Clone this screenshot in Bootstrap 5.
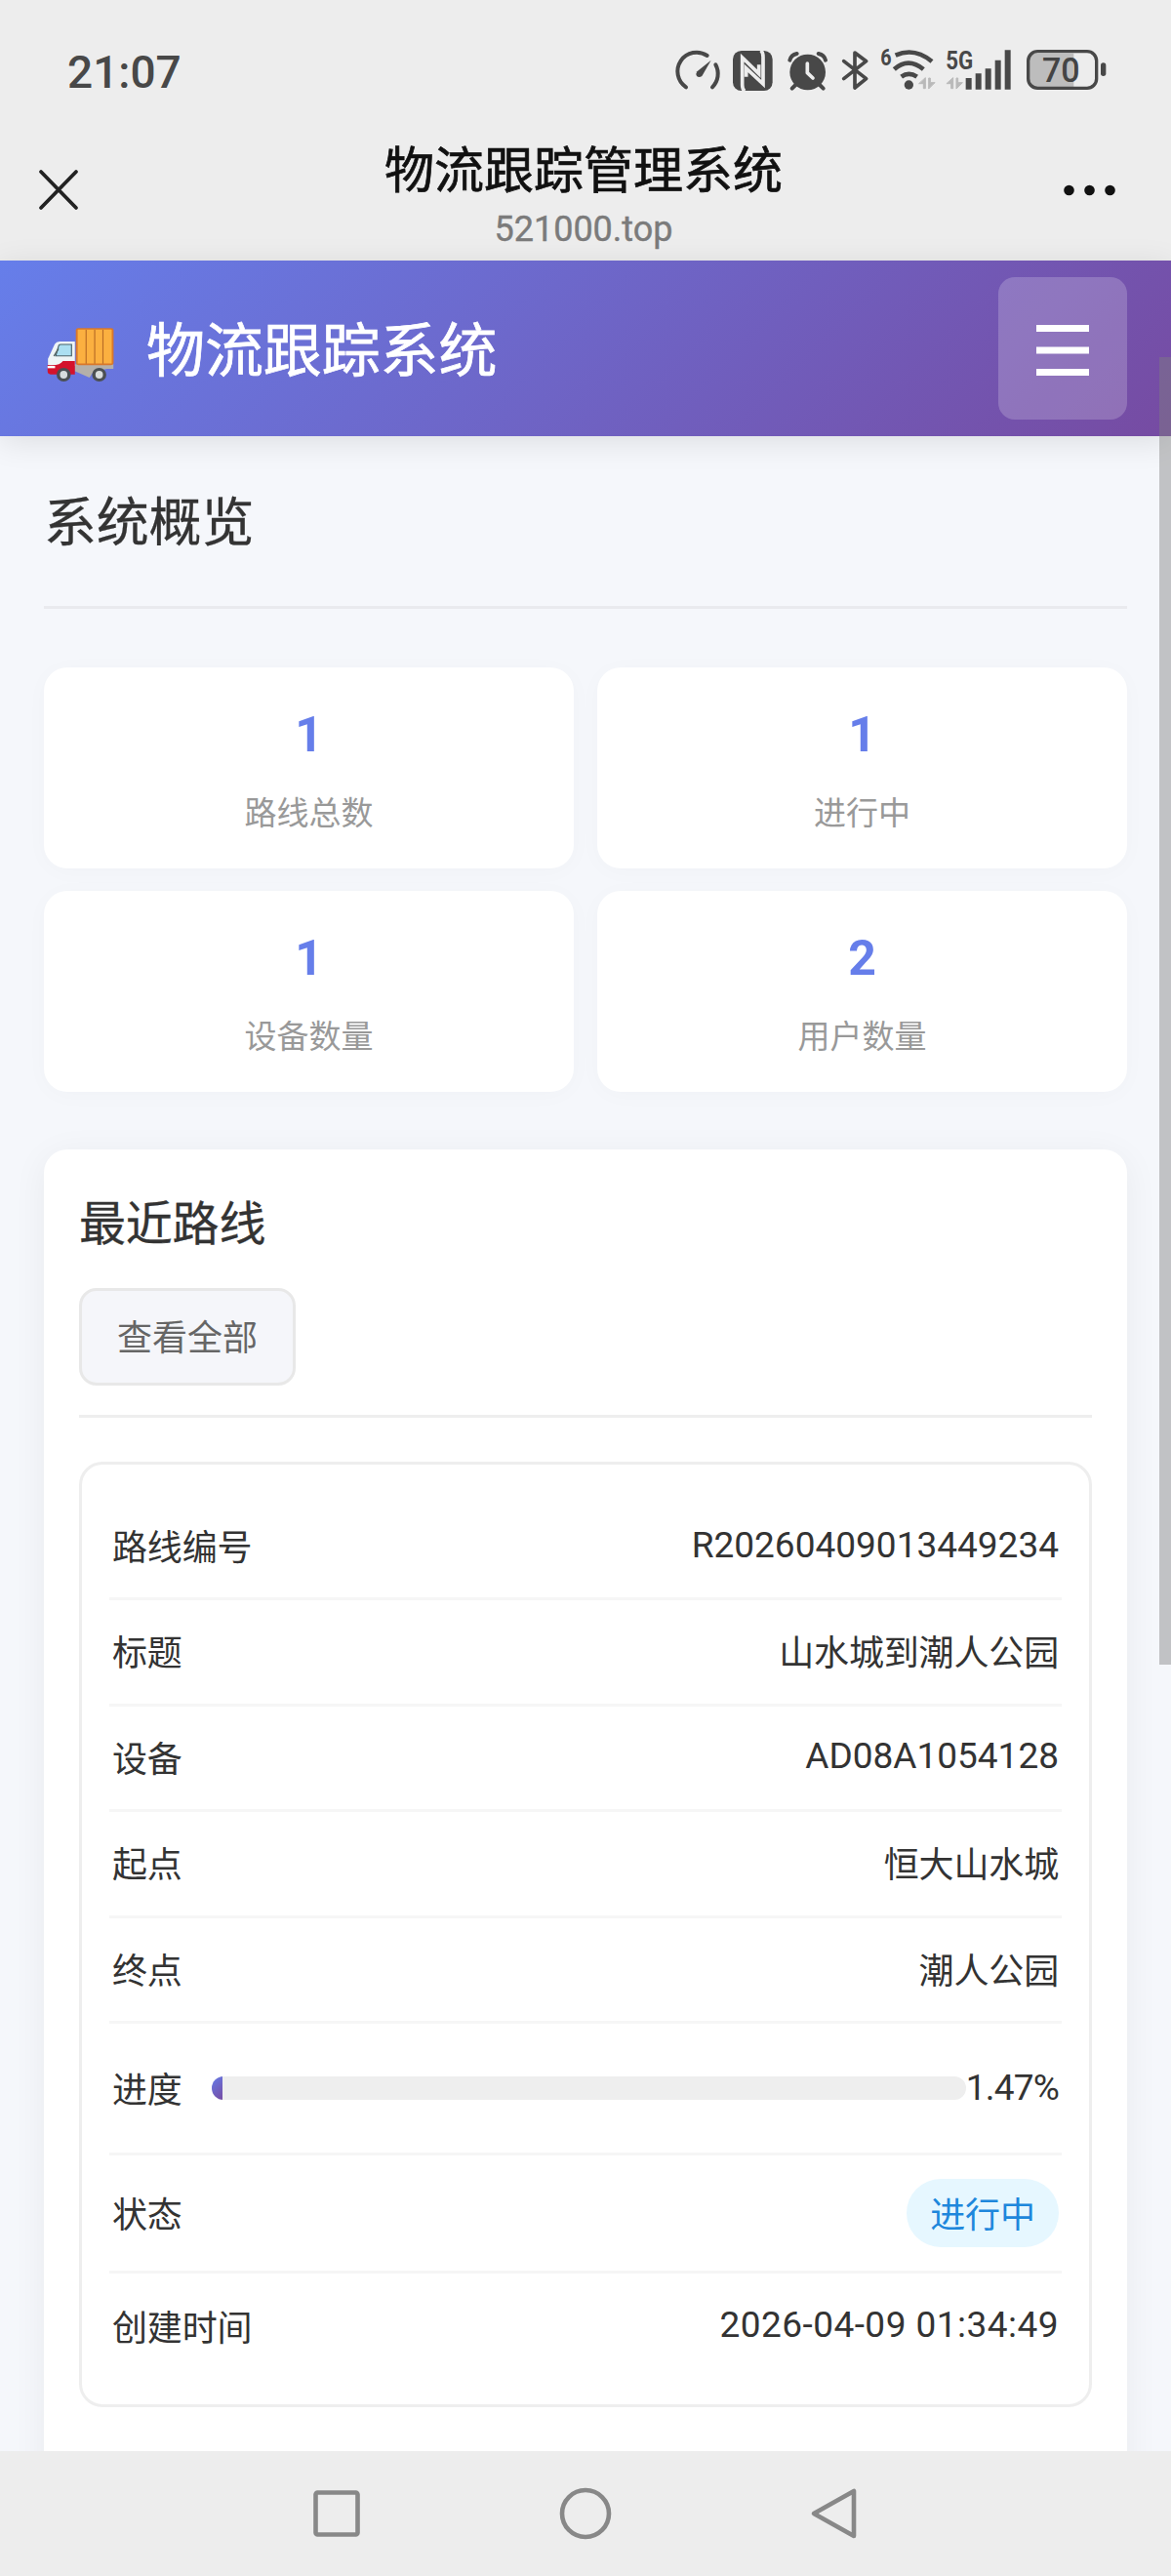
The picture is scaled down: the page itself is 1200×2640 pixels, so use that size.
<!DOCTYPE html>
<html lang="zh-CN">
<head>
<meta charset="utf-8">
<meta name="viewport" content="width=device-width, initial-scale=1">
<title>物流跟踪管理系统</title>
<link rel="stylesheet" href="https://cdn.jsdelivr.net/npm/bootstrap@5.3.0/dist/css/bootstrap.min.css">
<style>
  body { width: 1200px; height: 2640px; overflow: hidden; background: #f5f7fb; color: #333;
    font-family: "Noto Sans CJK SC", sans-serif; font-size: 36px; line-height: 1.2; }
  svg { display: block; flex: none; }
  /* phone chrome */
  .sys-status { height: 147px; background: #ededed; padding: 0 39px 0 69px; }
  .sys-clock { font: 500 46px/1 Roboto, sans-serif; color: #484848; }
  .wv-bar { height: 120px; background: #ededed; padding: 0 56px 0 38px; }
  .wv-heading { margin-left: 20px; margin-top: -6px; }
  .wv-title { font-size: 51px; line-height: 60px; color: #111; font-weight: 400; -webkit-text-stroke: .7px #111; }
  .wv-host { font: 400 36px/42px Roboto, sans-serif; color: #7b7b7b; margin-top: 13px; -webkit-text-stroke: .4px #7b7b7b; }
  /* application header */
  .app-head { height: 180px; padding: 0 45px; background: linear-gradient(135deg, #667eea 0%, #764ba2 100%);
    box-shadow: 0 6px 30px rgba(0,0,0,.1); position: relative; }
  .app-name { font-size: 60px; line-height: 70px; -webkit-text-stroke: .7px #fff; letter-spacing: -.1px; margin-bottom: 4px; }
  .menu-toggle { width: 132px; height: 146px; border: 0; border-radius: 17px; background: rgba(255,255,255,.2); }
  .app-main { height: 2065px; overflow: hidden; padding: 0 45px; }
  .page-title { height: 177px; border-bottom: 3px solid #e9eaee; font-size: 54px; padding-bottom: 3px; letter-spacing: -.2px; -webkit-text-stroke: .3px #333; }
  .stat-grid { display: grid; grid-template-columns: 1fr 1fr; gap: 23px 24px; margin-top: 60px; }
  .stat-box { height: 206px; border-radius: 24px; background: #fff; padding-top: 39px; box-shadow: 0 3px 24px rgba(0,0,0,.025); }
  .stat-num { font: 700 50px/60px Roboto, sans-serif; color: #667eea; }
  .stat-label { font-size: 33px; line-height: 40px; color: #999; margin-top: 28px; }
  .panel { margin-top: 59px; height: 1400px; border-radius: 24px; background: #fff; padding: 0 36px;
    box-shadow: 0 6px 36px rgba(0,0,0,.055); }
  .panel-top { height: 275px; border-bottom: 3px solid #eee; padding-top: 42px; }
  .panel-title { font-size: 48px; line-height: 60px; letter-spacing: -.2px; -webkit-text-stroke: .3px #333; }
  .btn-all { width: 222px; height: 100px; border: 3px solid #e8e8e8; border-radius: 18px; background: #f5f6fa;
    color: #666; font-size: 36px; margin-top: 40px; padding: 0 0 4px; }
  .route { margin-top: 45px; height: 969px; border: 3px solid #eee; border-radius: 24px; padding: 31px 28px 0; }
  .route-row { height: 108.4px; border-bottom: 3px solid #f6f6f6; padding: 0 3px 2px; letter-spacing: -.15px; }
  .route-row .val { font: 400 37px/44px Roboto, "Noto Sans CJK SC", sans-serif; letter-spacing: 0; }
  .route-row .pct { letter-spacing: -.8px; }
  .route-row .stamp { letter-spacing: .47px; }
  .route-row .han { font: inherit; letter-spacing: -.15px; }
  .row-progress { height: 135px; padding-bottom: 0; }
  .row-state { height: 121px; padding-bottom: 0; }
  .track { height: 24px; border-radius: 12px; background: #eee; overflow: hidden; margin-left: 30px; }
  .fill { height: 24px; background: linear-gradient(135deg, #667eea, #764ba2); }
  .state-pill { width: 156px; height: 70px; border-radius: 35px; background: #e6f7ff; color: #1e87dc; }
  .sys-nav { height: 128px; background: #ededed; position: relative; }
  .scroll-thumb { position: absolute; left: 1188px; top: 366px; width: 12px; height: 1340px; background: rgba(128,128,128,.44); }
</style>
</head>
<body class="position-relative">
<div class="sys-status d-flex align-items-center justify-content-between">
  <span class="sys-clock">21:07</span>
  <svg width="480" height="90" viewBox="0 0 1440 270" fill="none" stroke="#484848" stroke-linecap="round" stroke-linejoin="round">
    <!-- speed gauge -->
    <path d="M66 181A58 58 0 0 1 131 84M157 112A58 58 0 0 1 147 181" stroke-width="12"/>
    <path d="M143 98L115 147Q106 153 99 147Q95 140 100 133Z" fill="#484848" stroke="none"/>
    <!-- NFC -->
    <rect x="210" y="69" width="122" height="123" rx="26" fill="#484848" stroke="none"/>
    <path d="M246 193Q239 187 239 174V90L290 140V112M296 68Q303 74 303 88V171L251 123V149" stroke="#ededed" stroke-width="11" stroke-linecap="butt" stroke-linejoin="miter"/>
    <!-- alarm -->
    <circle cx="440" cy="135" r="55" fill="#484848" stroke="none"/>
    <path d="M385 98Q389 82 407 78M495 98Q491 82 473 78M403 174L392 185M477 174L488 185" stroke-width="12"/>
    <path d="M439 108V137L456 153" stroke="#ededed" stroke-width="11"/>
    <!-- bluetooth -->
    <path d="M551 101L620 155L585 183V75L620 101L551 155" stroke-width="11"/>
    <!-- wifi -->
    <path d="M710 83Q768 57 822 102" stroke-width="14" stroke-linecap="butt"/>
    <path d="M706 126Q749 88 796 126M728 149Q751 132 776 149" stroke-width="14" stroke-linecap="butt"/>
    <circle cx="751" cy="174" r="14" fill="#484848" stroke="none"/>
    <g id="arrows" fill="#b9b9b9" stroke="#b9b9b9" stroke-width="3"><path d="M802 153V185H796V170H783ZM812 185V153H817V167H830Z"/></g>
    <use href="#arrows" x="85"/>
    <!-- signal -->
    <path d="M935 153V188M965 139V188M995 124V188M1025 98V188M1055 67V188" stroke-width="18" stroke-linecap="butt"/>
    <g fill="#484848" stroke="none" font-family="Roboto, sans-serif" font-weight="700">
      <text x="664" y="114" font-size="70" textLength="34" lengthAdjust="spacingAndGlyphs">6</text>
      <text x="865" y="126" font-size="80" textLength="84" lengthAdjust="spacingAndGlyphs">5G</text>
    </g>
    <!-- battery -->
    <path d="M1144 77H1258V180H1144Q1120 180 1120 155V102Q1120 77 1144 77Z" fill="#bdbdbd" stroke="none"/>
    <rect x="1118" y="71" width="210" height="113" rx="29" stroke-width="10"/>
    <path d="M1349 114V139" stroke-width="16"/>
    <text x="1219" y="165" font-size="106" text-anchor="middle" textLength="116" lengthAdjust="spacingAndGlyphs" fill="#444" stroke="none" font-family="Roboto, sans-serif" font-weight="500">70</text>
  </svg>
</div>

<header class="wv-bar d-flex align-items-start justify-content-between">
  <svg width="44" height="44" viewBox="0 0 44 44" style="margin-top:26px" stroke="#222" stroke-width="3.8" stroke-linecap="round"><path d="M4 3L40 40M40 3L4 40"/></svg>
  <div class="wv-heading text-center ms-auto me-auto ps-4">
    <div class="wv-title">物流跟踪管理系统</div>
    <div class="wv-host">521000.top</div>
  </div>
  <svg width="54" height="14" viewBox="0 0 54 14" style="margin-top:41px" fill="#111"><circle cx="5.5" cy="7" r="5.3"/><circle cx="26.5" cy="7" r="5.3"/><circle cx="47.5" cy="7" r="5.3"/></svg>
</header>

<nav class="app-head d-flex align-items-center justify-content-between text-white">
  <div class="d-flex align-items-center">
    <svg width="69" height="56" viewBox="126 231 180 168" preserveAspectRatio="none" style="margin:14px 33px 0 3px">
      <path d="M200 343H304V357H287L250 366L240 384L200 364Z" fill="#b4b0aa"/>
      <rect x="206" y="234" width="96" height="109" rx="4" fill="#fbb040" stroke="#d9772b" stroke-width="5"/>
      <path d="M231 237V341M254 237V341M276 237V341" stroke="#b86c26" stroke-width="3"/>
      <path d="M129 347V326L147 281Q151 273 160 273H201V348Z" fill="#eef4f6"/>
      <path d="M150 317L158 285Q159 282 164 282H192V317Z" fill="#abdff2" stroke="#48626c" stroke-width="3"/>
      <path d="M145 318L157 295" stroke="#566" stroke-width="4"/>
      <path d="M128 345Q160 349 169 333H201V374H136Q128 374 128 364Z" fill="#d4122c"/>
      <path d="M128 348H148V355H128Z" fill="#fff"/>
      <ellipse cx="171" cy="375" rx="19" ry="21" fill="#4b4f53"/><ellipse cx="171" cy="375" rx="10" ry="12" fill="#d8dcdd"/>
      <ellipse cx="266" cy="375" rx="19" ry="21" fill="#4b4f53"/><ellipse cx="266" cy="375" rx="10" ry="12" fill="#d8dcdd"/>
    </svg>
    <span class="app-name">物流跟踪系统</span>
  </div>
  <button class="menu-toggle d-flex align-items-center justify-content-center p-0" type="button" aria-label="菜单">
    <svg width="54" height="52" viewBox="0 0 54 52" fill="#fff" class="mt-1"><path d="M0 0H54V7H0ZM0 22.5H54V29.5H0ZM0 45H54V52H0Z"/></svg>
  </button>
</nav>

<main class="app-main">
  <div class="page-title d-flex align-items-center">系统概览</div>
  <section class="stat-grid">
    <div class="stat-box d-flex flex-column align-items-center"><div class="stat-num">1</div><div class="stat-label">路线总数</div></div>
    <div class="stat-box d-flex flex-column align-items-center"><div class="stat-num">1</div><div class="stat-label">进行中</div></div>
    <div class="stat-box d-flex flex-column align-items-center"><div class="stat-num">1</div><div class="stat-label">设备数量</div></div>
    <div class="stat-box d-flex flex-column align-items-center"><div class="stat-num">2</div><div class="stat-label">用户数量</div></div>
  </section>
  <section class="panel">
    <div class="panel-top">
      <div class="panel-title">最近路线</div>
      <button class="btn-all btn d-flex align-items-center justify-content-center" type="button">查看全部</button>
    </div>
    <div class="route">
      <div class="route-row d-flex align-items-center justify-content-between"><span>路线编号</span><span class="val">R20260409013449234</span></div>
      <div class="route-row d-flex align-items-center justify-content-between"><span>标题</span><span class="val han">山水城到潮人公园</span></div>
      <div class="route-row d-flex align-items-center justify-content-between"><span>设备</span><span class="val">AD08A1054128</span></div>
      <div class="route-row d-flex align-items-center justify-content-between"><span>起点</span><span class="val han">恒大山水城</span></div>
      <div class="route-row d-flex align-items-center justify-content-between"><span>终点</span><span class="val han">潮人公园</span></div>
      <div class="route-row row-progress d-flex align-items-center"><span>进度</span>
        <div class="track flex-grow-1"><div class="fill" style="width:1.47%"></div></div><span class="val pct">1.47%</span></div>
      <div class="route-row row-state d-flex align-items-center justify-content-between"><span>状态</span><span class="state-pill d-flex align-items-center justify-content-center">进行中</span></div>
      <div class="route-row border-0 d-flex align-items-center justify-content-between"><span>创建时间</span><span class="val stamp">2026-04-09 01:34:49</span></div>
    </div>
  </section>
</main>

<footer class="sys-nav d-flex align-items-center justify-content-center">
  <svg width="560" height="56" viewBox="0 0 560 56" fill="none" stroke="#888" stroke-width="4.6" stroke-linejoin="round">
    <rect x="3.5" y="6.5" width="43" height="43" rx="2"/>
    <circle cx="280" cy="28" r="24"/>
    <path d="M514 28L555 5V51Z"/>
  </svg>
</footer>
<div class="scroll-thumb"></div>
<script src="https://cdn.jsdelivr.net/npm/bootstrap@5.3.0/dist/js/bootstrap.bundle.min.js"></script>
</body>
</html>
